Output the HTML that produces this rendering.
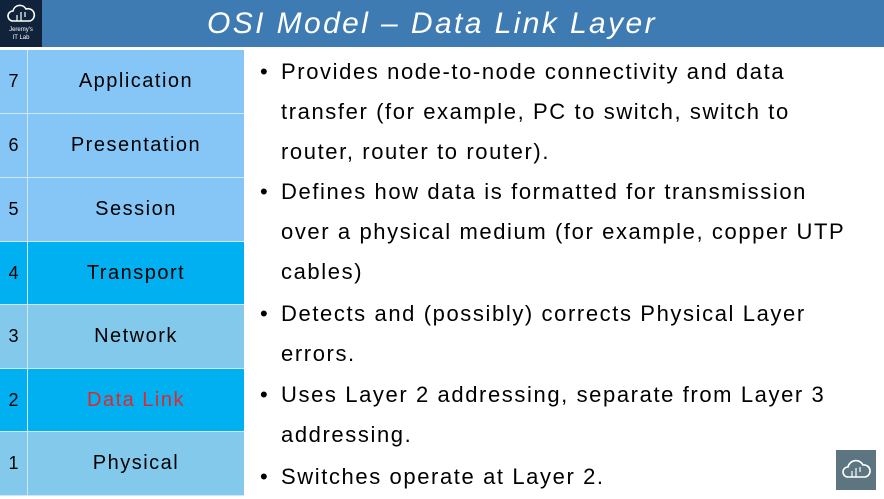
<!DOCTYPE html>
<html><head><meta charset="utf-8"><style>
body{margin:0;width:884px;height:499px;background:#fff;position:relative;overflow:hidden;font-family:"Liberation Sans",sans-serif}
.hdr{position:absolute;left:0;top:0;width:884px;height:47px;background:#3e7bb2}
.logo{position:absolute;left:0;top:0;width:42px;height:47px;background:#10233a;color:#fff;font-size:6px;text-align:center}
.title{position:absolute;left:0;width:864px;top:0;height:47px;line-height:47px;text-align:center;color:#fff;font-size:30px;font-style:italic;letter-spacing:2.4px}
.row{position:absolute;left:0;width:244px;font-size:20px;color:#000;letter-spacing:1.5px}
.row .n{position:absolute;left:0;width:27px;top:0;bottom:0;border-right:1px solid #cfe8f8;display:flex;align-items:center;justify-content:center;font-size:18px;letter-spacing:0}
.row .t{position:absolute;left:28px;right:0;top:0;bottom:0;display:flex;align-items:center;justify-content:center}
.row{border-bottom:1px solid #cfe8f8;box-sizing:border-box}
.b{position:absolute;left:260px;width:620px;font-size:22px;line-height:40px;color:#000;letter-spacing:1.6px;white-space:nowrap}
.b span{position:absolute;left:0}
.b div{margin-left:21px}
.cl{position:absolute;left:836px;top:450px;width:40px;height:40px;background:#5c7581}
</style></head><body>
<div class="hdr"></div>
<div class="title">OSI Model – Data Link Layer</div>
<div class="logo"><svg width="30" height="22" viewBox="0 0 30 22" style="margin-top:4px"><path d="M7 17a5 5 0 0 1 0-10a7 7 0 0 1 13-2a5 5 0 0 1 4 12z" fill="none" stroke="#fff" stroke-width="1.6"/><path d="M11 17v-6M15 17v-9M19 13v-5" stroke="#fff" stroke-width="1.2"/></svg><div style="margin-top:-2px;line-height:8px">Jeremy's<br>IT Lab</div></div>
<div class="row" style="top:50px;height:64px;background:#85c6f7"><div class="n">7</div><div class="t">Application</div></div>
<div class="row" style="top:114px;height:64px;background:#85c6f7"><div class="n">6</div><div class="t">Presentation</div></div>
<div class="row" style="top:178px;height:64px;background:#85c6f7"><div class="n">5</div><div class="t">Session</div></div>
<div class="row" style="top:242px;height:63px;background:#00b0f0"><div class="n">4</div><div class="t">Transport</div></div>
<div class="row" style="top:305px;height:64px;background:#83c9eb"><div class="n">3</div><div class="t">Network</div></div>
<div class="row" style="top:369px;height:63px;background:#00b0f0"><div class="n">2</div><div class="t" style="color:#e0282c">Data Link</div></div>
<div class="row" style="top:432px;height:64px;background:#83c9eb"><div class="n">1</div><div class="t">Physical</div></div>
<div class="b" style="top:52px"><span>•</span><div>Provides node-to-node connectivity and data<br>transfer (for example, PC to switch, switch to<br>router, router to router).</div></div>
<div class="b" style="top:172px"><span>•</span><div>Defines how data is formatted for transmission<br>over a physical medium (for example, copper UTP<br>cables)</div></div>
<div class="b" style="top:294px"><span>•</span><div>Detects and (possibly) corrects Physical Layer<br>errors.</div></div>
<div class="b" style="top:375px"><span>•</span><div>Uses Layer 2 addressing, separate from Layer 3<br>addressing.</div></div>
<div class="b" style="top:457px"><span>•</span><div>Switches operate at Layer 2.</div></div>
<div class="cl"><svg width="40" height="40" viewBox="0 0 40 40"><path d="M12 27a5 5 0 0 1 0-10a8 8 0 0 1 15-2a6 6 0 0 1 2 12z" fill="none" stroke="#fff" stroke-width="1.6"/><path d="M16 27v-6M20 27v-9M24 22v-5" stroke="#fff" stroke-width="1.2"/></svg></div>
</body></html>
